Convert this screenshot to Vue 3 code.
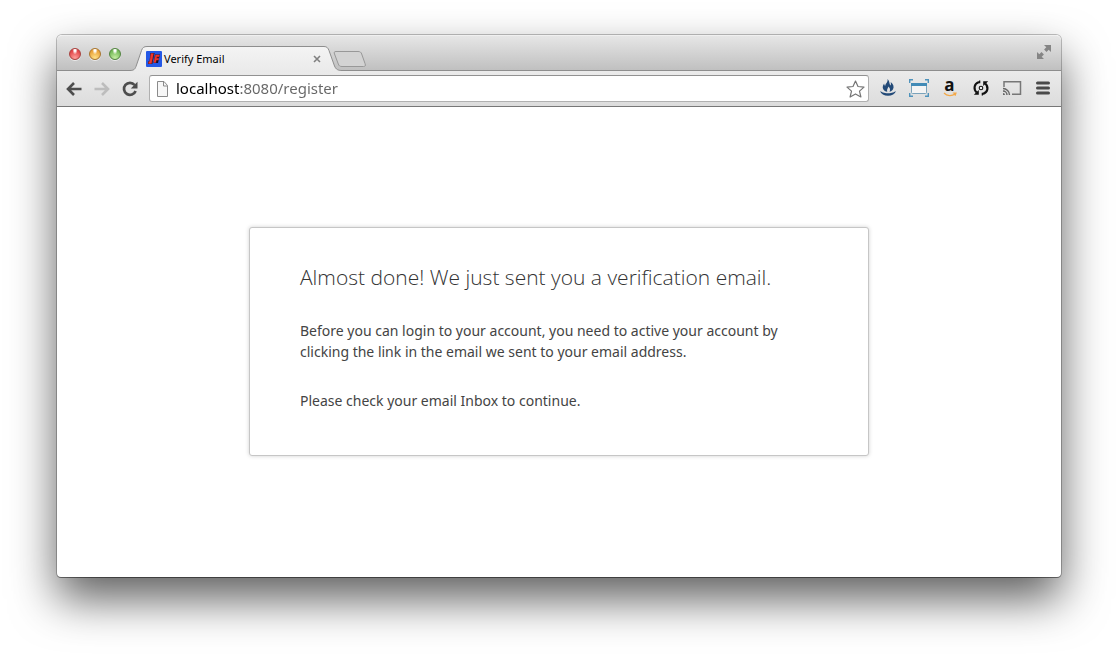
<script setup>
import { ref } from 'vue'

const address = ref('localhost:8080/register')
const lights = [
  { name: 'Close', tone: 'red' },
  { name: 'Minimize', tone: 'amber' },
  { name: 'Zoom', tone: 'green' },
]
</script>

<template>
  <div class="desktop">
    <div class="window">
      <header class="titlebar">
        <div class="lights">
          <button v-for="l in lights" :key="l.name" class="light" :class="l.tone" :aria-label="l.name"></button>
        </div>
        <div class="tab">
          <svg class="tab-shape" width="212" height="26" viewBox="0 0 212 26" aria-hidden="true">
            <defs>
              <linearGradient id="tabfill" x1="0" y1="0" x2="0" y2="1">
                <stop offset="0" stop-color="#f4f4f4" />
                <stop offset="1" stop-color="#eaeaea" />
              </linearGradient>
            </defs>
            <path d="M0 24.5C4 24.5 5 23 6 20.500L11.500 4.500C12.500 1.500 14 .5 17 .5H194C197 .5 198 2 199 4.500L204.500 20C206 23.500 208 24.500 212 24.500V26H0Z" fill="url(#tabfill)" />
            <path d="M0 24.500C4 24.500 5 23 6 20.500L11.500 4.500C12.500 1.500 14 .5 17 .5H194C197 .5 198 2 199 4.500L204.500 20C206 23.500 208 24.500 212 24.500" fill="none" stroke="#8e8e8e" />
          </svg>
          <svg class="favicon" width="16" height="16" viewBox="0 0 16 16" aria-hidden="true">
            <rect width="16" height="16" rx="1" fill="#2458e6" />
            <path d="M4.500 2H8.500L6.300 13H2V10.500H3.500Z M9 3.500H14L13 7.500L12 12H7.500Z" fill="#190f26" />
            <path d="M5 2.500H7.500L5.500 12.500H2.500L2.800 10.800H3.700Z M9.500 4H13.500L13 5.800H10.900L10.600 7.300H12.800L12.400 9H10.200L9.800 11.500H7.800Z" fill="#f0342c" stroke="#f0342c" stroke-width=".4" />
          </svg>
          <span class="tab-title">Verify Email</span>
          <button class="tab-close" aria-label="Close tab">
            <svg width="8" height="8" viewBox="0 0 8 8"><path d="M1 1L7 7M7 1L1 7" stroke="#808080" stroke-width="1.600" /></svg>
          </button>
        </div>
        <button class="new-tab" aria-label="New tab">
          <svg width="34" height="17" viewBox="0 0 34 17">
            <path d="M3 .5H25C27 .5 28 1 28.700 3L32 12.500C33 15 32 15.500 30.500 15.500H9C7 15.500 6 15 5.300 13L1.500 3C.8 1.300 1.200 .5 3 .5Z" fill="#d3d3d3" stroke="#989898" />
          </svg>
        </button>
        <button class="fullscreen" aria-label="Full screen">
          <svg width="16" height="16" viewBox="0 0 16 16">
            <path d="M8 1H15V8L12.700 5.700L10.500 7.900L8.100 5.500L10.300 3.300ZM1 8L3.300 10.300L5.500 8.100L7.900 10.500L5.700 12.700L8 15H1Z" fill="#858585" />
          </svg>
        </button>
      </header>

      <nav class="toolbar" aria-label="Browser toolbar">
        <button class="nav" aria-label="Back">
          <svg width="16" height="14" viewBox="0 0 16 14"><path d="M8 1L2 7L8 13M2 7H15.500" fill="none" stroke="#4d4d4d" stroke-width="2.600" /></svg>
        </button>
        <button class="nav" aria-label="Forward" disabled>
          <svg width="16" height="14" viewBox="0 0 16 14"><path d="M8 1L14 7L8 13M14 7H.5" fill="none" stroke="#bdbdbd" stroke-width="2.600" /></svg>
        </button>
        <button class="nav" aria-label="Reload">
          <svg width="16" height="16" viewBox="0 0 16 16">
            <path d="M12.600 4A6 6 0 1 0 13.600 10" fill="none" stroke="#4d4d4d" stroke-width="2.700" />
            <path d="M15.500 .8V7.500H8.800Z" fill="#4d4d4d" />
          </svg>
        </button>

        <div class="omnibox">
          <svg class="page-icon" width="13" height="16" viewBox="0 0 13 16" aria-hidden="true">
            <path d="M1.500 .5H8L11.500 4.500V15.500H1.500Z" fill="#f7f7f7" stroke="#8b8b8b" />
            <path d="M7.500 .5V5H11.500" fill="none" stroke="#8b8b8b" />
          </svg>
          <input v-model="address" class="address" type="text" aria-label="Address" spellcheck="false" />
          <button class="star" aria-label="Bookmark this page">
            <svg width="19" height="18" viewBox="0 0 19 18">
              <path d="M9.500 1L12 6.500L18 7.100L13.500 11.100L14.900 17L9.500 13.900L4.100 17L5.500 11.100L1 7.100L7 6.500Z" fill="#fff" stroke="#757575" stroke-width="1.200" stroke-linejoin="round" />
            </svg>
          </button>
        </div>

        <div class="extensions">
          <button class="ext" aria-label="Campfire">
            <svg width="16" height="18" viewBox="0 0 16 18">
              <path d="M7.500 0C10 2.500 9 4.500 10.500 6.500C11 5.500 11 4.500 10.700 3C13.500 5 14.300 8 13 10.300C12.200 12 10.500 12.500 9.500 12.700C10.700 10.500 9.800 9 8.500 7.500C8.300 9 6.500 10 7.300 12.800C5.500 12.500 3.200 11.500 2.800 9C2.600 7.500 3.100 6 4.100 4.500C4.400 6 4.700 6.500 5.200 7C5.300 4.500 8.200 3.500 7.500 0Z" fill="#234a78" />
              <path d="M0 12C2 13.200 3.500 14.200 8 14.200C12.500 14.200 14 13.200 16 12C15 15 12 16.700 8 16.700C4 16.700 1 15 0 12Z" fill="#234a78" />
            </svg>
          </button>
          <button class="ext" aria-label="Screen capture">
            <svg width="20" height="18" viewBox="0 0 20 18">
              <path d="M.7 4V.7H4M16 .7H19.300V4M19.300 14V17.300H16M4 17.300H.7V14" fill="none" stroke="#4f93bc" stroke-width="1.400" />
              <rect x="2.500" y="4.500" width="15" height="10" rx="1" fill="#f4f4f4" stroke="#7ba3bb" />
              <rect x="2" y="4" width="16" height="3" fill="#428bb7" />
            </svg>
          </button>
          <button class="ext amazon" aria-label="Amazon">
            <span class="letter">a</span>
            <svg width="14" height="5" viewBox="0 0 14 5"><path d="M1 1C4 4.300 9 4.300 12.500 1.500M9.800 1H13L12 3.800" fill="none" stroke="#f3a847" stroke-width="1.200" /></svg>
          </button>
          <button class="ext" aria-label="Sync">
            <svg width="16" height="16" viewBox="0 0 16 16">
              <path d="M6 2C.5 4 .5 9.500 3.700 12.500M10 14C15.500 12 15.500 6.500 12.300 3.500" fill="none" stroke="#111" stroke-width="2.100" />
              <path d="M.8 14.800H5.800V10ZM15.200 1.200H10.200V6ZM6 .6H7.300V3.300H6ZM8.700 12.700H10V15.400H8.700Z" fill="#111" />
              <circle cx="8" cy="8" r="1.800" fill="#eee" stroke="#111" stroke-width="1.100" />
            </svg>
          </button>
          <button class="ext" aria-label="Cast">
            <svg width="20" height="16" viewBox="0 0 20 16">
              <path d="M2 7V1.700H18.500V14.300H10" fill="none" stroke="#777" stroke-width="1.500" />
              <path d="M1 8.500A6.500 6.500 0 0 1 7.500 15M1 11A4 4 0 0 1 5 15" fill="none" stroke="#666" stroke-width="1.400" />
              <path d="M1 13A2 2 0 0 1 3 15H1Z" fill="#666" />
            </svg>
          </button>
          <button class="ext" aria-label="Menu">
            <svg width="14" height="14" viewBox="0 0 14 14"><path d="M1.500 2H12.500M1.500 7H12.500M1.500 12H12.500" stroke="#4a4a4a" stroke-width="3" stroke-linecap="round" /></svg>
          </button>
        </div>
      </nav>

      <main class="content">
        <section class="card">
          <h1>Almost done! We just sent you a verification email.</h1>
          <p>Before you can login to your account, you need to active your account by clicking the link in the email we sent to your email address.</p>
          <p>Please check your email Inbox to continue.</p>
        </section>
      </main>
    </div>
  </div>
</template>

<style>
body {
  background: #fff;
}
</style>

<style scoped>
* {
  box-sizing: border-box;
}
button {
  display: flex;
  align-items: center;
  justify-content: center;
  flex: none;
  margin: 0;
  padding: 0;
  border: 0;
  background: none;
}
svg {
  display: block;
  flex: none;
}
.desktop {
  display: flex;
  min-height: 100vh;
  padding: 35px 57px 79px;
  overflow: hidden;
  font-family: "Noto Sans", "Open Sans", sans-serif;
}
.window {
  display: flex;
  flex: 1;
  flex-direction: column;
  min-width: 0;
  border-radius: 5px 5px 4px 4px;
  background: #fff;
  box-shadow: 0 0 0 1px rgba(0, 0, 0, 0.24), 0 1px 0 0 rgba(0, 0, 0, 0.3), 0 22px 46px rgba(0, 0, 0, 0.63);
}
.titlebar {
  display: flex;
  align-items: flex-end;
  height: 36px;
  border-top: 1px solid #f0f0f0;
  border-bottom: 1px solid #8e8e8e;
  border-radius: 5px 5px 0 0;
  background: linear-gradient(#e6e6e6, #c0c0c0);
}
.lights {
  display: flex;
  align-self: center;
  gap: 8px;
  margin: 2px 9px 0 12px;
}
.light {
  width: 12px;
  height: 12px;
  border: 1px solid;
  border-radius: 50%;
  box-shadow: 0 1px 0 rgba(255, 255, 255, 0.6);
}
.red {
  border-color: #a8423f;
  background: radial-gradient(ellipse at 50% 10%, #fff 0 12%, transparent 36%), radial-gradient(circle at 50% 90%, #ffa09c, #e2474a 70%);
}
.amber {
  border-color: #a8762f;
  background: radial-gradient(ellipse at 50% 10%, #fff 0 12%, transparent 36%), radial-gradient(circle at 50% 90%, #ffe28a, #eaa33a 70%);
}
.green {
  border-color: #528440;
  background: radial-gradient(ellipse at 50% 10%, #fff 0 12%, transparent 36%), radial-gradient(circle at 50% 90%, #c6efa4, #76ba5a 70%);
}
.tab {
  position: relative;
  display: flex;
  align-items: center;
  width: 200px;
  height: 25px;
  padding: 0 9px 0 16px;
  margin-bottom: -1px;
}
.tab-shape {
  position: absolute;
  left: 0;
  top: 0;
}
.favicon,
.tab-title,
.tab-close {
  position: relative;
}
.tab-title {
  flex: 1;
  margin-left: 2px;
  color: #000;
  font-size: 11px;
  line-height: 16px;
}
.new-tab {
  margin: 0 0 2px 3px;
}
.fullscreen {
  align-self: center;
  margin: 0 9px 2px auto;
}
.toolbar {
  display: flex;
  align-items: center;
  height: 36px;
  padding: 0 3px;
  border-bottom: 1px solid #777;
  background: linear-gradient(#ebebeb, #dcdcdc);
}
.nav {
  width: 28px;
  height: 28px;
}
.omnibox {
  display: flex;
  flex: 1;
  align-items: center;
  min-width: 0;
  height: 27px;
  margin: 0 3px 0 5px;
  padding: 0 3px 0 6px;
  border: 1px solid #b0b0b0;
  border-top-color: #929292;
  border-radius: 3px;
  background: #fff;
}
.address {
  flex: 1;
  min-width: 0;
  height: 23px;
  margin-left: 7px;
  padding: 0 0 2px;
  border: 0;
  outline: 0;
  background: linear-gradient(to right, #000 63px, #666 63px);
  -webkit-background-clip: text;
  background-clip: text;
  color: transparent;
  font-family: "Noto Sans", sans-serif;
  font-size: 15px;
}
.extensions {
  display: flex;
}
.ext {
  width: 31px;
  height: 28px;
  padding-bottom: 2px;
}
.amazon {
  flex-direction: column;
}
.letter {
  height: 13px;
  color: #111;
  font: 700 17px/12px "Open Sans", sans-serif;
}
.content {
  flex: 1;
  padding: 120px 24px 24px;
}
.card {
  max-width: 620px;
  margin: 0 auto;
  padding: 34px 50px 44px;
  border: 1px solid #c6c6c6;
  border-radius: 3px;
  background: #fff;
  box-shadow: 0 0 4px rgba(0, 0, 0, 0.18);
  color: #444;
}
h1 {
  margin: 0;
  color: #333;
  font-family: "Open Sans", sans-serif;
  font-size: 21px;
  font-weight: 300;
  line-height: 30px;
}
p {
  margin: 28px 0 0;
  font-size: 14px;
  line-height: 21px;
}
</style>
